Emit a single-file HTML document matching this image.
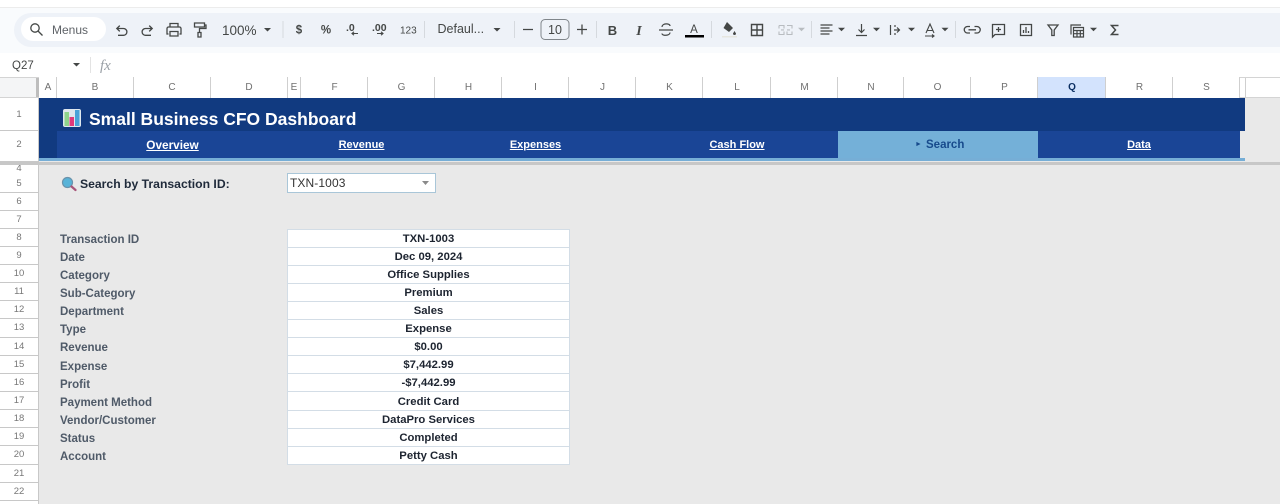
<!DOCTYPE html>
<html><head><meta charset="utf-8"><title>Small Business CFO Dashboard</title>
<style>
html,body{margin:0;padding:0;width:1280px;height:504px;overflow:hidden;background:#e9e9e9;font-family:"Liberation Sans",sans-serif}
.a{position:absolute}
.col{position:absolute;top:77px;height:21px;line-height:22px;text-align:center;font-size:10px;color:#707070;border-right:1px solid #cfcfcf;box-sizing:border-box;background:#fff}
.sh{padding-left:1px}
.rn{position:absolute;left:0;width:38px;box-sizing:border-box;text-align:center;font-size:9.5px;color:#777;background:#fff;border-bottom:1px solid #c8c8c8}
.lab{position:absolute;left:60px;font-size:11.5px;font-weight:bold;color:#4f5a68;line-height:20px;white-space:nowrap}
.val{position:absolute;left:287px;width:283px;box-sizing:border-box;height:19px;background:#fff;border:1px solid #d3dde6;text-align:center;font-size:11.3px;font-weight:bold;color:#1d2430;line-height:18px;white-space:nowrap}
.nav{position:absolute;top:131px;height:27px;line-height:28px;text-align:center;font-size:11px;font-weight:bold;color:#fff;text-decoration:underline;white-space:nowrap}
</style></head><body>
<!-- chrome -->
<div class="a" style="left:0;top:0;width:1280px;height:77px;background:#fff"></div>
<div class="a" style="left:0;top:7px;width:1280px;height:46px;background:#f9fbfd;border-top:1px solid #ececec;box-sizing:border-box"></div>
<div class="a" style="left:14px;top:13px;width:1266px;height:34px;background:#eef2f8;border-radius:17px 0 0 17px"></div>
<div class="a" style="left:21px;top:17px;width:85px;height:24px;background:#fff;border-radius:12px"></div>
<!-- toolbar icons and labels -->
<svg class="a" style="left:0;top:0" width="1280" height="77" viewBox="0 0 1280 77" font-family="Liberation Sans, sans-serif">
<g fill="none" stroke="#444746" stroke-width="1.3">
<circle cx="35" cy="28" r="4.2"/><path d="M38 31l4.500 4.500"/>
<!-- undo/redo -->
<path d="M117 28.500h6.500a3.400 3.400 0 0 1 0 6.800H118M119.800 25.600l-3 2.900 3 2.900"/>
<path d="M152 28.500h-6.500a3.400 3.400 0 0 0 0 6.800H151M149.200 25.600l3 2.900-3 2.900"/>
<!-- print -->
<path d="M170 27v-3.500h8V27M168.500 34h-1.500v-5.500a1.500 1.500 0 0 1 1.500-1.500h11a1.500 1.500 0 0 1 1.500 1.500V34h-1.500M170 31.500h8v4.500h-8z"/>
<!-- paint roller -->
<path d="M194.500 23h10v4h-10zM199.500 30v-1.500h6.500v-3.500h-1.500M199.500 30v2M198 32.500h3v4.500h-3z"/>
<!-- dividers -->
<path stroke="#d5d9de" stroke-width="1" d="M283 21v17M424.500 21v17M514.500 21v17M596.500 21v17M711.500 21v17M811.500 21v17M955.500 21v17"/>
<!-- decimal arrows -->
<path d="M352 33.500h6M354 31.800l-2 1.700 2 1.700M377 33.500h6M381 31.800l2 1.700-2 1.700" stroke-width="1.100"/>
<!-- minus plus -->
<path d="M523 29.500h10M577 29.500h10M582 24.500v10" stroke-width="1.300"/>
<!-- strike -->
<path d="M659 30h14M662 27c0-4 8-4 8-1M670 32.500c0 3.500-8 3.500-8 1" stroke-width="1.200"/>
<!-- grid -->
<path d="M751.500 24.500h11v11h-11zM757 24.500v11M751.500 30h11" stroke-width="1.400"/>
<!-- align -->
<path d="M820.500 25h12M820.500 28h9M820.500 31h12M820.500 34h9" stroke-width="1.200"/>
<!-- valign -->
<path d="M856 35.500h11M861.500 24v8.500M858.500 29.500l3 3 3-3" stroke-width="1.200"/>
<!-- wrap -->
<path d="M890.500 25v10M894 30h5.500M897 27.500l2.500 2.500-2.500 2.500M895 25v2M895 33v2" stroke-width="1.200"/>
<!-- rotate -->
<path d="M926 33l4-9 4 9M927.300 30.500h5.500M925 36h8M932 34.500l2 1.500-2 1.500" stroke-width="1.100"/>
<!-- link -->
<path d="M970 26.500h-2.500a3.200 3.200 0 0 0 0 6.500h2.500M974.500 26.500h2.500a3.200 3.200 0 0 1 0 6.500h-2.500M968.500 29.800h7.500" stroke-width="1.300"/>
<!-- comment -->
<path d="M992.500 24.500h12v10h-9.500l-2.500 2.500zM998.500 27v5M996 29.500h5" stroke-width="1.300"/>
<!-- chart -->
<path d="M1020.500 24.500h11v11h-11zM1023.500 30v3M1026 27v6M1028.500 31v2" stroke-width="1.300"/>
<!-- filter -->
<path d="M1048 25h10l-3.800 5v5.500h-2.400V30z" stroke-width="1.300"/>
<!-- pivot -->
<path d="M1071 34.500V25h10M1073.500 27.500h10v9.500h-10zM1073.500 30.500h10M1073.500 33.700h10M1077 30.500v6.500M1080.300 30.500v6.500" stroke-width="1.200"/>
<!-- sigma -->
<path d="M1118.500 25.500h-7l4 4.500-4 4.500h7" stroke-width="1.500"/>
</g>
<!-- merge icon grey -->
<path d="M779 25.500h5v3M779 25.500v3M787 25.500h5v3M792 25.500v3M779 31.500v3h5v-3M787 31.500v3h5v-3M781 29.900h3M787 29.900h3" fill="none" stroke="#b8bcc0" stroke-width="1.100"/>
<!-- fill bucket -->
<path d="M727 22l6 6-4 4-5.500-4zM734.500 31l1.500 2.500a1.500 1.500 0 1 1-3 0z" fill="#444746"/>
<rect x="722" y="36" width="15" height="1.500" fill="#e6e6df"/>
<!-- carets -->
<g fill="#444746">
<path d="M264 28h7l-3.500 3.500zM493.500 28h7l-3.500 3.500zM838 27.800h7l-3.500 3.500zM873 27.800h7l-3.500 3.500zM908 27.800h7l-3.500 3.500zM941.500 27.800h7l-3.500 3.500zM1090 27.800h7l-3.500 3.500zM73 63h7l-3.500 3.500z"/>
<path d="M798 27.800h7l-3.500 3.500z" fill="#b8bcc0"/>
</g>
<g fill="#444746">
<text x="52" y="34" font-size="12" fill="#5f6368">Menus</text>
<text x="222" y="35" font-size="13.500">100%</text>
<text x="299" y="33.500" font-size="11.500" font-weight="bold" text-anchor="middle">$</text>
<text x="326" y="33.500" font-size="11.500" font-weight="bold" text-anchor="middle">%</text>
<text x="346" y="31" font-size="10.500" font-weight="bold">.0</text>
<text x="372" y="31" font-size="10.500" font-weight="bold">.00</text>
<text x="400" y="33.500" font-size="10">123</text>
<text x="437.500" y="33" font-size="12.500">Defaul...</text>
<text x="555" y="34" font-size="12.500" text-anchor="middle">10</text>
<text x="612.500" y="35" font-size="13" font-weight="bold" text-anchor="middle">B</text>
<text x="639" y="35" font-size="14" font-weight="bold" font-style="italic" font-family="Liberation Serif, serif" text-anchor="middle">I</text>
<text x="694" y="33" font-size="11.500" text-anchor="middle">A</text>
<text x="12" y="69" font-size="11.500">Q27</text>
<text x="100" y="70" font-size="15" font-family="Liberation Serif, serif" font-style="italic" fill="#9aa0a6">fx</text>
</g>
<rect x="685" y="35" width="19" height="2.500" fill="#000"/>
<rect x="541" y="19.500" width="28" height="20" rx="4" fill="none" stroke="#80868b" stroke-width="1"/>
<path d="M90.500 57v16" stroke="#e3e3e3"/>
</svg>
<!-- column header band -->
<div class="a" style="left:0;top:77px;width:1280px;height:21px;background:#fff;border-top:1px solid #d4d4d4;border-bottom:1px solid #d4d4d4;box-sizing:border-box"></div>
<div class="a" style="left:0;top:78px;width:36px;height:19px;background:#f4f5f6"></div>
<div class="a" style="left:36px;top:78px;width:3px;height:19px;background:#bdbdbd"></div>
<div class="col sh" style="left:39px;width:18px">A</div>
<div class="col" style="left:57px;width:77px">B</div>
<div class="col" style="left:134px;width:77px">C</div>
<div class="col" style="left:211px;width:77px">D</div>
<div class="col" style="left:288px;width:13px">E</div>
<div class="col sh" style="left:301px;width:67px">F</div>
<div class="col sh" style="left:368px;width:67px">G</div>
<div class="col sh" style="left:435px;width:67px">H</div>
<div class="col sh" style="left:502px;width:67px">I</div>
<div class="col sh" style="left:569px;width:67px">J</div>
<div class="col sh" style="left:636px;width:67px">K</div>
<div class="col sh" style="left:703px;width:68px">L</div>
<div class="col sh" style="left:771px;width:67px">M</div>
<div class="col sh" style="left:838px;width:66px">N</div>
<div class="col sh" style="left:904px;width:67px">O</div>
<div class="col sh" style="left:971px;width:67px">P</div>
<div class="col sh" style="left:1038px;width:68px;background:#d3e3fd;color:#0b2f62;font-weight:bold">Q</div>
<div class="col sh" style="left:1106px;width:67px">R</div>
<div class="col sh" style="left:1173px;width:67px">S</div>
<div class="a" style="left:1245px;top:78px;width:1px;height:20px;background:#cfcfcf"></div>
<!-- row header -->
<div class="a" style="left:0;top:98px;width:38px;height:406px;background:#fff;border-right:1px solid #c8c8c8"></div>
<div class="rn" style="top:98px;height:33px;line-height:33px">1</div>
<div class="rn" style="top:131px;height:31px;line-height:27px">2</div>
<div class="rn" style="top:165px;height:8px;line-height:8px;overflow:hidden;border:0">4</div>
<div class="rn" style="top:174px;height:19px;line-height:19px">5</div>
<div class="rn" style="top:193px;height:18px;line-height:18px">6</div>
<div class="rn" style="top:211px;height:18px;line-height:18px">7</div>
<div class="rn" style="top:229px;height:18px;line-height:18px">8</div>
<div class="rn" style="top:247px;height:18px;line-height:18px">9</div>
<div class="rn" style="top:265px;height:18px;line-height:18px">10</div>
<div class="rn" style="top:283px;height:18px;line-height:18px">11</div>
<div class="rn" style="top:301px;height:18px;line-height:18px">12</div>
<div class="rn" style="top:319px;height:19px;line-height:18px">13</div>
<div class="rn" style="top:338px;height:18px;line-height:18px">14</div>
<div class="rn" style="top:356px;height:18px;line-height:18px">15</div>
<div class="rn" style="top:374px;height:18px;line-height:18px">16</div>
<div class="rn" style="top:392px;height:18px;line-height:18px">17</div>
<div class="rn" style="top:410px;height:18px;line-height:18px">18</div>
<div class="rn" style="top:428px;height:18px;line-height:18px">19</div>
<div class="rn" style="top:446px;height:19px;line-height:18px">20</div>
<div class="rn" style="top:465px;height:18px;line-height:18px">21</div>
<div class="rn" style="top:483px;height:18px;line-height:18px">22</div>
<!-- banner -->
<div class="a" style="left:39px;top:98px;width:1206px;height:63px;background:#113a80"></div>
<div class="a" style="left:57px;top:131px;width:1183px;height:27px;background:#1a4596"></div>
<div class="a" style="left:1240px;top:131px;width:5px;height:27px;background:#e9e9e9"></div>
<div class="a" style="left:39px;top:158px;width:1206px;height:3px;background:#76aed6"></div>
<div class="a" style="left:0;top:162px;width:1280px;height:3px;background:#c7c7c7"></div>
<div class="a" style="left:838px;top:131px;width:200px;height:27px;background:#74b0d8"></div>
<svg class="a" style="left:62px;top:108px" width="20" height="20" viewBox="0 0 20 20">
<rect x="1" y="1" width="18" height="18" rx="2" fill="#dfe8ee"/>
<rect x="2.500" y="4" width="4.500" height="14" fill="#8ed48b"/>
<rect x="7.500" y="9" width="4.500" height="9" fill="#e13a7a"/>
<rect x="13" y="2" width="4.500" height="16" fill="#4aa3d8"/>
</svg>
<div class="a" style="left:89px;top:107px;font-size:17.500px;font-weight:bold;color:#fff;line-height:24px;white-space:nowrap">Small Business CFO Dashboard</div>
<div class="nav" style="left:57px;width:231px;font-size:11.800px">Overview</div>
<div class="nav" style="left:288px;width:147px">Revenue</div>
<div class="nav" style="left:435px;width:201px">Expenses</div>
<div class="nav" style="left:636px;width:202px">Cash Flow</div>
<div class="a" style="left:915px;top:141px;font-size:7px;line-height:8px;color:#174a8c">&#9658;</div>
<div class="a" style="left:926px;top:131px;height:27px;line-height:28px;font-size:11.500px;font-weight:bold;color:#174a8c">Search</div>
<div class="nav" style="left:1038px;width:202px">Data</div>
<!-- search row -->
<svg class="a" style="left:61px;top:176px" width="16" height="16" viewBox="0 0 16 16">
<circle cx="6.500" cy="6.500" r="5" fill="#58b3d8" stroke="#6b93ab" stroke-width="1.200"/>
<path d="M10.500 10.500l4 3.500" stroke="#a8567a" stroke-width="2.200" stroke-linecap="round"/>
</svg>
<div class="a" style="left:80px;top:175px;font-size:12.200px;font-weight:bold;color:#1f2a3a;line-height:18px;white-space:nowrap">Search by Transaction ID:</div>
<div class="a" style="left:287px;top:173px;width:149px;height:20px;box-sizing:border-box;background:#fff;border:1px solid #a9c6d8;font-size:12px;color:#333;line-height:19px;padding-left:2px;letter-spacing:.1px">TXN-1003</div>
<svg class="a" style="left:421px;top:180px" width="10" height="6"><path d="M1 1h7L4.500 5z" fill="#8a8a8a"/></svg>
<!-- table -->
<div class="lab" style="top:230px">Transaction ID</div><div class="val" style="left:287px;top:229px">TXN-1003</div>
<div class="lab" style="top:248px">Date</div><div class="val" style="top:247px">Dec 09, 2024</div>
<div class="lab" style="top:266px">Category</div><div class="val" style="top:265px">Office Supplies</div>
<div class="lab" style="top:284px">Sub-Category</div><div class="val" style="top:283px">Premium</div>
<div class="lab" style="top:302px">Department</div><div class="val" style="top:301px">Sales</div>
<div class="lab" style="top:320px">Type</div><div class="val" style="top:319px">Expense</div>
<div class="lab" style="top:338px">Revenue</div><div class="val" style="top:337px">$0.00</div>
<div class="lab" style="top:357px">Expense</div><div class="val" style="top:355px">$7,442.99</div>
<div class="lab" style="top:375px">Profit</div><div class="val" style="top:373px">-$7,442.99</div>
<div class="lab" style="top:393px">Payment Method</div><div class="val" style="top:391px;height:20px;line-height:20px">Credit Card</div>
<div class="lab" style="top:411px">Vendor/Customer</div><div class="val" style="top:410px">DataPro Services</div>
<div class="lab" style="top:429px">Status</div><div class="val" style="top:428px">Completed</div>
<div class="lab" style="top:447px">Account</div><div class="val" style="top:446px">Petty Cash</div>
</body></html>
